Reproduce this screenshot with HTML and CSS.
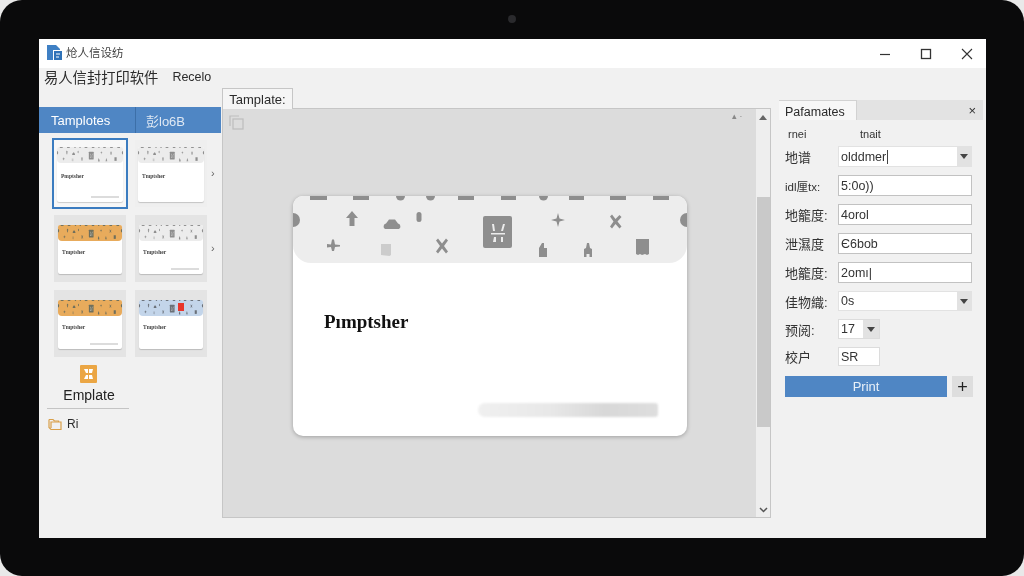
FILE: index.html
```html
<!DOCTYPE html>
<html lang="zh-CN">
<head>
    <meta charset="UTF-8">
    <meta name="viewport" content="width=device-width, initial-scale=1.0">
    <title>易人信封打印软件</title>
    <link rel="stylesheet" href="styles.css">
</head>
<body>
    <svg class="defs" width="0" height="0">
        <symbol id="stamp-row" viewBox="0 0 394 67" preserveAspectRatio="none">
            <g fill="currentColor">
                <rect x="17" y="0" width="17" height="4"/>
                <rect x="60" y="0" width="16" height="4"/>
                <path d="M103 0h9a4.500 4.500 0 0 1-9 0z"/>
                <path d="M133 0h9a4.500 4.500 0 0 1-9 0z"/>
                <rect x="165" y="0" width="16" height="4"/>
                <rect x="208" y="0" width="15" height="4"/>
                <path d="M246 0h9a4.500 4.500 0 0 1-9 0z"/>
                <rect x="276" y="0" width="15" height="4"/>
                <rect x="317" y="0" width="16" height="4"/>
                <rect x="360" y="0" width="16" height="4"/>
                <path d="M0 17a7 7 0 0 1 0 14z"/>
                <path d="M394 17a7 7 0 0 0 0 14z"/>
                <path d="M59 15l6 7h-3.500v8h-5v-8H53z"/>
                <path d="M92 33a3 3 0 0 1 1-5.500l3-4h6l3 4a3 3 0 0 1 1 5.500z"/>
                <rect x="123.500" y="16" width="5" height="10" rx="2.500"/>
                <path d="M265 17l1.500 5.500 5.500 1.500-5.500 1.500-1.500 5.500-1.500-5.500-5.500-1.500 5.500-1.500z"/>
                <path d="M34 48l4 .5 1-5 2 0 1 5 5 .5 0 1.500-5 .5-1 4-2 0-1-4-4 .5z"/>
                <path d="M143 44.500l2-2 4 5 4-5 2 2-4 5.500 4 5.500-2 2-4-5-4 5-2-2 4-5.500z"/>
                <path d="M317 20.500l2-2 3.500 4.500 4-4 2 2-4 4.500 4 5-2 2-4-4.500-3.500 4.500-2-2 3.500-5z"/>
                <path d="M246 61v-9l3-5h2v5h3v9z"/>
                <path d="M291 61v-8l2-1 1-5h2l1 5 2 1v8h-2.500v-3h-3v3z"/>
                <path d="M343 43h13v15l-2 1-2-1-3 1-2-1-2 1-2-1z"/>
                <path opacity=".35" d="M88 48h10v11l-1.500 1-8.500-1z"/>
                <path d="M192 20h25a2 2 0 0 1 2 2v28a2 2 0 0 1-2 2h-25a2 2 0 0 1-2-2V22a2 2 0 0 1 2-2z"/>
            </g>
            <g fill="#ececec">
                <path d="M199 28h2l1 7h-2z"/>
                <path d="M210 28h2l-2 7h-2z"/>
                <rect x="198" y="37" width="14" height="1.500"/>
                <path d="M201 41h2v5h-3z"/>
                <rect x="208" y="41" width="2" height="5"/>
            </g>
        </symbol>
        <symbol id="chev-down" viewBox="0 0 8 5">
            <path d="M0 0h8L4 5z" fill="currentColor"/>
        </symbol>
    </svg>

    <div class="device">
        <div class="camera"></div>
        <div class="window">
            <div class="titlebar">
                <svg class="app-icon" width="16" height="16" viewBox="0 0 16 16">
                    <path d="M0 0h9l4 4v1H6v10H0z" fill="#3f80c4"/>
                    <path d="M7 6h8v9H7z" fill="#2f72b8"/>
                    <path d="M9 9h4M9 12h3" stroke="#fff" stroke-width="1.200"/>
                </svg>
                <span class="app-name">炝人信设纺</span>
                <div class="win-btns">
                    <svg width="12" height="12" viewBox="0 0 12 12"><path d="M1 6.500h10" stroke="#333" stroke-width="1.200"/></svg>
                    <svg width="12" height="12" viewBox="0 0 12 12"><rect x="1.500" y="1.500" width="9" height="9" fill="none" stroke="#333" stroke-width="1.300"/></svg>
                    <svg width="12" height="12" viewBox="0 0 12 12"><path d="M1 1l10 10M11 1L1 11" stroke="#333" stroke-width="1.100"/></svg>
                </div>
            </div>

            <div class="menubar">
                <span class="menu-main">易人信封打印软件</span>
                <span class="menu-item">Recelo</span>
            </div>

            <div class="workspace">
                <div class="left-panel">
                    <div class="left-tabs">
                        <div class="left-tab first">Tamplotes</div>
                        <div class="left-tab second">彭lo6B</div>
                    </div>
                    <div class="thumb-area">
                        <div class="thumbs">
                            <div class="thumb tall selected">
                                <div class="mini">
                                    <svg class="mini-head"><use href="#stamp-row"/></svg>
                                    <div class="mini-text">Pmptsher</div>
                                    <div class="mini-foot"></div>
                                </div>
                            </div>
                            <div class="thumb tall light">
                                <div class="mini">
                                    <svg class="mini-head"><use href="#stamp-row"/></svg>
                                    <div class="mini-text">Tmptsher</div>
                                </div>
                            </div>
                            <div class="thumb">
                                <div class="mini">
                                    <svg class="mini-head orange"><use href="#stamp-row"/></svg>
                                    <div class="mini-text">Tmptsher</div>
                                </div>
                            </div>
                            <div class="thumb">
                                <div class="mini">
                                    <svg class="mini-head"><use href="#stamp-row"/></svg>
                                    <div class="mini-text">Tmptsher</div>
                                    <div class="mini-foot"></div>
                                </div>
                            </div>
                            <div class="thumb">
                                <div class="mini">
                                    <svg class="mini-head orange"><use href="#stamp-row"/></svg>
                                    <div class="mini-text">Tmptsher</div>
                                    <div class="mini-foot"></div>
                                </div>
                            </div>
                            <div class="thumb">
                                <div class="mini">
                                    <svg class="mini-head blue"><use href="#stamp-row"/></svg>
                                    <span class="mini-mark"></span>
                                    <div class="mini-text">Tmptsher</div>
                                </div>
                            </div>
                        </div>
                        <div class="thumb-arrows">
                            <span>&#8250;</span>
                            <span>&#8250;</span>
                        </div>
                    </div>
                    <div class="template-btn">
                        <svg width="17" height="18" viewBox="0 0 17 18">
                            <rect width="17" height="18" rx="1" fill="#eba644"/>
                            <path d="M4 4h4v4H6zM9 4h4l-1 4H9zM4 14l2-4h2v4zM9 10h3l1 4H9z" fill="#fff"/>
                        </svg>
                        <span>Emplate</span>
                    </div>
                    <div class="folder-row">
                        <svg width="14" height="14" viewBox="0 0 14 14">
                            <path d="M1 2.500h4l1.500 1.500h4v1" fill="none" stroke="#d9a04a" stroke-width="1.200"/>
                            <path d="M1 2.500v8l2 2h10V5H3v6" fill="none" stroke="#d9a04a" stroke-width="1.200"/>
                        </svg>
                        <span>Ri</span>
                    </div>
                </div>

                <div class="center-panel">
                    <div class="doc-tab">Tamplate:</div>
                    <div class="canvas-frame">
                        <div class="canvas-view">
                            <svg class="copy-icon" width="15" height="15" viewBox="0 0 15 15">
                                <path d="M10 1H1v10" fill="none" stroke="#bdbdbd" stroke-width="1.200"/>
                                <rect x="4" y="4" width="10" height="10" fill="none" stroke="#bdbdbd" stroke-width="1.200"/>
                            </svg>
                            <span class="view-marks">&#9652; &#8729;</span>
                            <div class="card">
                                <svg class="card-head"><use href="#stamp-row"/></svg>
                                <div class="card-name">Pımptsher</div>
                                <div class="card-foot"></div>
                            </div>
                        </div>
                        <div class="scrollbar">
                            <svg class="sb-up" width="8" height="5"><use href="#chev-down"/></svg>
                            <div class="sb-thumb"></div>
                            <svg class="sb-down" width="9" height="6" viewBox="0 0 9 6">
                                <path d="M1 1l3.500 3.500L8 1" fill="none" stroke="#555" stroke-width="1.500"/>
                            </svg>
                        </div>
                    </div>
                </div>

                <div class="right-panel">
                    <div class="param-tabs">
                        <div class="param-tab">Pafamates</div>
                        <div class="param-strip">&#215;</div>
                    </div>
                    <div class="param-sub">
                        <span>rnei</span>
                        <span>tnait</span>
                    </div>
                    <div class="form">
                        <label>地谱</label>
                        <div class="field combo flat"><span class="val caret">olddmer</span><i class="drop"><svg width="8" height="5"><use href="#chev-down"/></svg></i></div>
                        <label class="tight">idl厘tx:</label>
                        <div class="field"><span class="val">5:0o))</span></div>
                        <label>地籠度:</label>
                        <div class="field"><span class="val">4orol</span></div>
                        <label>泄濕度</label>
                        <div class="field"><span class="val">&#1028;6bob</span></div>
                        <label>地籠度:</label>
                        <div class="field"><span class="val">2omı|</span></div>
                        <label>佳物織:</label>
                        <div class="field combo flat"><span class="val">0s</span><i class="drop"><svg width="8" height="5"><use href="#chev-down"/></svg></i></div>
                        <label>预阅:</label>
                        <div class="field combo small"><span class="val">17</span><i class="drop"><svg width="8" height="5"><use href="#chev-down"/></svg></i></div>
                        <label>校户</label>
                        <div class="field small"><span class="val">SR</span></div>
                    </div>
                    <div class="print-row">
                        <button class="print-btn">Print</button>
                        <button class="plus-btn">+</button>
                    </div>
                </div>
            </div>
        </div>
    </div>
</body>
</html>
```
FILE: styles.css
```css
* {
    margin: 0;
    padding: 0;
    box-sizing: border-box;
}
html, body {
    width: 1024px;
    height: 576px;
    overflow: hidden;
}
body {
    background-color: #e9e9e9;
    color: #2b2b2b;
    font-family: "Liberation Sans", "Noto Sans CJK SC", sans-serif;
}
.defs {
    display: block;
}
.device {
    position: relative;
    width: 1024px;
    height: 576px;
    background-color: #0a0a0b;
    border-radius: 22px;
    padding: 39px 38px 38px 39px;
}
.camera {
    position: absolute;
    left: 508px;
    top: 15px;
    width: 8px;
    height: 8px;
    border-radius: 50%;
    background-color: #2a2a2d;
}
.window {
    height: 100%;
    background-color: #f1f1f1;
    display: flex;
    flex-direction: column;
    filter: blur(0.35px);
}

/* title bar */
.titlebar {
    height: 29px;
    flex: none;
    background-color: #fff;
    display: flex;
    align-items: center;
    padding-left: 8px;
}
.app-icon {
    margin-top: -2px;
}
.app-name {
    margin: -4px 0 0 3px;
    font-size: 11.500px;
    color: #444;
}
.win-btns {
    margin-left: auto;
    padding-right: 13px;
    display: flex;
    gap: 29px;
}
.win-btns svg {
    display: block;
}

.menubar {
    height: 20px;
    flex: none;
    display: flex;
    align-items: center;
    padding-left: 5px;
    padding-bottom: 3px;
}
.menu-main {
    font-size: 14.300px;
}
.menu-item {
    margin-left: 14px;
    font-size: 12.500px;
}

.workspace {
    flex: 1;
    display: flex;
    min-height: 0;
}

/* left panel */
.left-panel {
    width: 182px;
    flex: none;
    padding-top: 19px;
}
.left-tabs {
    display: flex;
    height: 26px;
    background-color: #4f86c4;
    color: #fff;
    font-size: 13px;
}
.left-tab {
    display: flex;
    align-items: center;
}
.left-tab.first {
    width: 97px;
    padding-left: 12px;
    border-right: 1px solid #3c6fa8;
}
.left-tab.second {
    padding-left: 10px;
    color: #dfe8f3;
}
.thumb-area {
    display: flex;
    padding: 7px 0 0 15px;
}
.thumbs {
    display: grid;
    grid-template-columns: 72px 72px;
    grid-auto-rows: 67px;
    gap: 8px 9px;
}
.thumb {
    background-color: #e4e4e4;
    padding: 10px 4px 8px;
}
.thumb.tall {
    padding: 7px 3px 5px;
}
.thumb.tall .mini-text {
    padding-top: 10px;
}
.thumb.light {
    background-color: #efefef;
}
.thumb.selected {
    background-color: #f7f7f7;
    outline: 2px solid #3b7cc0;
}
.mini {
    position: relative;
    height: 100%;
    background-color: #fff;
    border-radius: 2px;
    box-shadow: 0 1px 1px rgba(0,0,0,0.18);
    overflow: hidden;
}
.mini-head {
    display: block;
    width: 100%;
    height: 16px;
    background-color: #ececec;
    color: #8e8e8e;
    border-radius: 0 0 4px 4px;
}
.mini-head.orange {
    background-color: #e8ab5c;
    color: #6f6f5c;
}
.mini-head.blue {
    background-color: #c3d5ea;
    color: #6a7078;
}
.mini-mark {
    position: absolute;
    left: 39px;
    top: 3px;
    width: 6px;
    height: 8px;
    background-color: #e8362c;
}
.mini-text {
    padding: 8px 0 0 4px;
    font-family: "Liberation Serif", serif;
    font-weight: bold;
    font-size: 5.500px;
    color: #444;
}
.mini-foot {
    position: absolute;
    right: 4px;
    bottom: 4px;
    width: 28px;
    height: 2px;
    background-color: #dcdcdc;
}
.thumb-arrows {
    width: 15px;
    display: flex;
    flex-direction: column;
    gap: 61px;
    padding: 26px 0 0 4px;
    font-size: 11px;
    line-height: 14px;
    color: #666;
}
.template-btn {
    width: 100px;
    margin-top: 8px;
    display: flex;
    flex-direction: column;
    align-items: center;
    font-size: 14px;
    color: #222;
    gap: 4px;
}
.template-btn svg {
    margin-left: -2px;
}
.folder-row {
    width: 82px;
    margin-left: 8px;
    margin-top: 5px;
    border-top: 1px solid #c4c4c4;
    padding-top: 8px;
    display: flex;
    align-items: center;
    gap: 5px;
    font-size: 12px;
}
.folder-row svg {
    margin-left: 1px;
}

/* center */
.center-panel {
    width: 549px;
    flex: none;
    margin-left: 1px;
    padding-bottom: 20px;
    display: flex;
    flex-direction: column;
}
.doc-tab {
    width: 71px;
    height: 21px;
    flex: none;
    display: flex;
    align-items: center;
    justify-content: center;
    background-color: #f5f5f5;
    border: 1px solid #c6c6c6;
    border-bottom: none;
    font-size: 13px;
    margin-bottom: -1px;
    position: relative;
}
.canvas-frame {
    flex: 1;
    display: flex;
    border: 1px solid #c6c6c6;
    background-color: #eeeeee;
    min-height: 0;
}
.canvas-view {
    position: relative;
    flex: 1;
    background-color: #dcdcdc;
    display: flex;
    align-items: center;
    justify-content: center;
    padding-top: 6px;
    padding-left: 1px;
}
.copy-icon {
    position: absolute;
    left: 6px;
    top: 6px;
}
.view-marks {
    position: absolute;
    right: 14px;
    top: 2px;
    font-size: 9px;
    color: #888;
}
.card {
    position: relative;
    width: 394px;
    height: 240px;
    background-color: #fff;
    border-radius: 10px;
    box-shadow: 0 1px 4px rgba(0,0,0,0.28);
    overflow: hidden;
}
.card-head {
    display: block;
    width: 100%;
    height: 67px;
    background-color: #ededed;
    color: #8e8e8e;
    border-radius: 0 0 18px 18px;
}
.card-name {
    padding: 48px 0 0 31px;
    font-family: "Liberation Serif", serif;
    font-weight: bold;
    font-size: 19px;
    color: #111;
}
.card-foot {
    position: absolute;
    left: 185px;
    top: 207px;
    width: 180px;
    height: 14px;
    border-radius: 7px 3px 3px 7px;
    background: linear-gradient(to right, #f0f0f0, #e8e8e8 40%, #d8d8d8 70%, #dedede);
    filter: blur(1px);
}
.scrollbar {
    width: 14px;
    flex: none;
    display: flex;
    flex-direction: column;
    align-items: center;
    color: #666;
}
.sb-up {
    margin-top: 6px;
    flex: none;
    transform: rotate(180deg);
}
.sb-thumb {
    width: 13px;
    height: 230px;
    margin-top: 77px;
    background-color: #c9c9c9;
}
.sb-down {
    margin-top: auto;
    margin-bottom: 4px;
}

/* right panel */
.right-panel {
    width: 204px;
    flex: none;
    margin-left: 8px;
    padding: 12px 11px 0 6px;
}
.param-tabs {
    display: flex;
    height: 20px;
    margin: 0 -11px 0 -6px;
}
.param-tab {
    width: 78px;
    display: flex;
    align-items: center;
    padding: 3px 0 0 6px;
    background-color: #f7f7f7;
    border-top: 1px solid #d2d2d2;
    border-right: 1px solid #d2d2d2;
    font-size: 12.500px;
}
.param-strip {
    flex: 1;
    display: flex;
    align-items: center;
    justify-content: flex-end;
    padding-right: 7px;
    background-color: #e3e3e3;
    font-size: 13px;
    color: #333;
}
.param-sub {
    display: flex;
    height: 26px;
    padding: 8px 0 0 3px;
    font-size: 11px;
    color: #333;
}
.param-sub span:first-child {
    width: 72px;
}
.form {
    display: grid;
    grid-template-columns: 53px 134px;
    grid-template-rows: repeat(5, 21px) 20px 20px 19px;
    row-gap: 8px;
    align-items: center;
}
.form label {
    font-size: 13px;
    color: #333;
    white-space: nowrap;
}
.form label.tight {
    font-size: 11.500px;
}
.field {
    height: 100%;
    display: flex;
    align-items: center;
    background-color: #fff;
    border: 1px solid #c2c2c2;
    font-size: 12.500px;
    color: #333;
}
.val {
    padding-left: 2px;
}
.caret {
    border-right: 1px solid #444;
    padding-right: 1px;
}
.field.flat {
    border-color: #e2e2e2;
}
.field.small {
    width: 42px;
    border-color: #dcdcdc;
}
.drop {
    margin-left: auto;
    width: 14px;
    height: 100%;
    display: flex;
    align-items: center;
    justify-content: center;
    background-color: #e2e2e2;
    color: #444;
}
.field.small .drop {
    width: 16px;
}
.print-row {
    display: flex;
    gap: 5px;
    margin-top: 10px;
    width: 188px;
}
.print-btn {
    width: 162px;
    height: 21px;
    background-color: #4f86c4;
    color: #e8f0f8;
    border: none;
    font-family: inherit;
    font-size: 13px;
}
.plus-btn {
    width: 21px;
    height: 21px;
    background-color: #dedede;
    color: #222;
    border: none;
    font-family: inherit;
    font-size: 18px;
    line-height: 20px;
}
```
